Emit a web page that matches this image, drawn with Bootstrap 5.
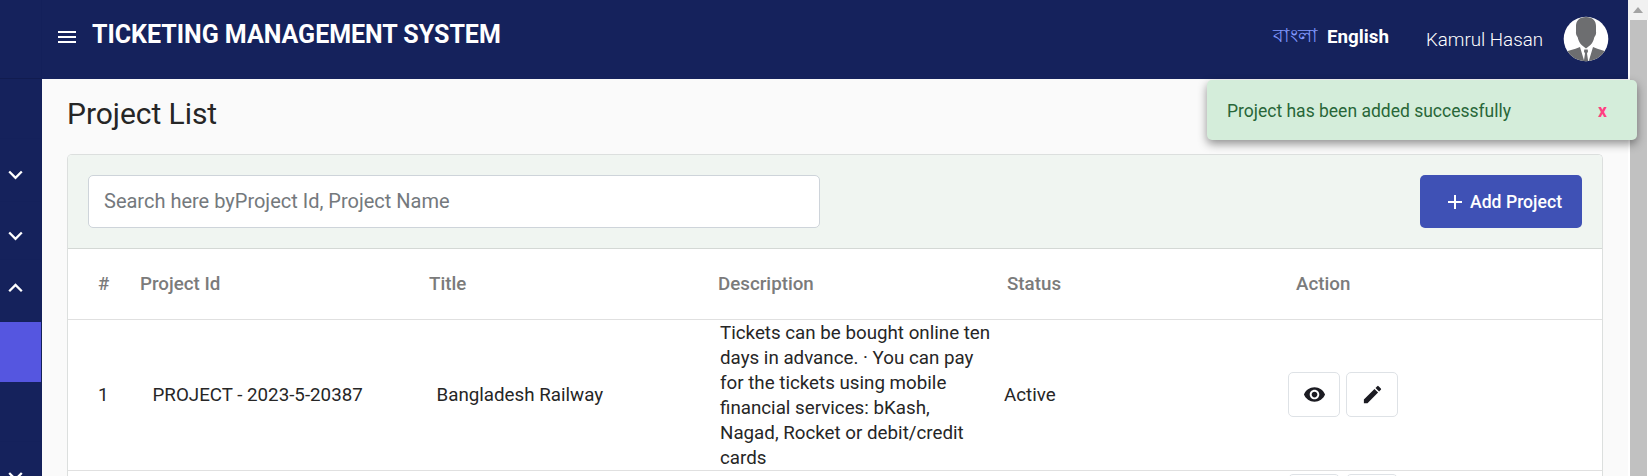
<!DOCTYPE html>
<html lang="en">
<head>
<meta charset="utf-8">
<title>Ticketing Management System</title>
<link href="https://cdn.jsdelivr.net/npm/bootstrap@5.3.0/dist/css/bootstrap.min.css" rel="stylesheet">
<style>
body{font-family:Roboto,"Noto Sans",sans-serif;font-size:18.75px;line-height:25px;color:#262626;background:#fafafa;height:476px}
.side-rail{width:42px;background:#15225c;border-right:1px solid #13205a}
.rail-brand{height:79px;border-bottom:1px solid #111c50}
.rail-item{height:60px;padding-left:7px;border-bottom:1px solid #14215b}
.rail-item.is-active{background:#5556e0;border:0}
.topbar{height:79px;background:#15225c;color:#fff;padding:0 19px 0 16px}
.brand-name{font-size:25px;font-weight:700;line-height:30px;margin:-9px 0 0 16px;letter-spacing:-.02px}
.lang-link{color:#8198ff;font-size:18.9px;line-height:24px;margin:-7px 9px 0 0}
.lang-current{margin:-5px 37px 0 0}
.user-name{margin:1px 20px 0 0}
.page-title{font-size:30px;font-weight:400;line-height:36px;padding:17px 0 22px;letter-spacing:-.05px}
.page-area{padding:0 25px}
.list-card{border:1px solid #dcdfde;border-bottom:0;border-radius:5px 5px 0 0;background:#fff;height:322px}
.list-tools{height:94px;background:#f0f5f1;border-bottom:1px solid #d4d8d5;padding:0 20px}
.search-box{width:732px;height:53px;border:1px solid #ced4da;border-radius:5px;font-size:20px;padding:0 15px 2px}
.search-box::placeholder{color:#74797d}
.add-btn{width:162px;height:53px;background:#3f51b5;color:#fff;border-radius:5px;font-size:17.6px;font-weight:500;padding:2px 19px 0 0}
.grid-row{display:grid;grid-template-columns:72px 289px 289px 289px 289px 1fr;border-bottom:1px solid #e0e0e0}
.grid-head{height:71px;color:#7b7b7b;font-weight:500}
.grid-head>:first-child,.grid-body>:first-child{padding-left:30px}
.grid-body{height:151px;grid-template-rows:150px}
.cell-id{padding-left:12.5px}
.cell-title{padding-left:7.5px}
.cell-desc{padding-left:2px;margin-top:2px}
.cell-status{margin-left:-3px}
.cell-actions{gap:6px;margin:-2px 0 0 -8px}
.next-row{padding-top:5px}
.icon-btn{width:52px;height:45px;border:1px solid #dee2e6;border-radius:5px;background:#fff}
.scroll-bar{width:20px;background:linear-gradient(90deg,#fff 2px,#c1c1c1 2px,#c1c1c1 19px,#fff 19px)}
.scroll-up{height:20px;background:#f1f1f1}
.toast-msg{top:80px;left:1207px;width:430px;height:60px;background:#d4edda;color:#286638;border-radius:5px;font-size:17.5px;padding:2px 30px 0 20px;box-shadow:0 4px 10px rgba(0,0,0,.42)}
.toast-x{color:#ff4081;font-weight:700}
</style>
</head>
<body class="d-flex overflow-hidden position-relative">
<aside class="side-rail flex-shrink-0 overflow-hidden">
  <div class="rail-brand"></div>
  <div class="rail-item"></div>
  <div class="rail-item d-flex align-items-center" style="height:63px;padding-top:10px"><svg width="17" height="12" viewBox="0 0 17 12"><path d="M2.200 2.500l6.300 6.300 6.300-6.300" fill="none" stroke="#fff" stroke-width="2.300"/></svg></div>
  <div class="rail-item d-flex align-items-center" style="height:58px;padding-top:11px"><svg width="17" height="12" viewBox="0 0 17 12"><path d="M2.200 2.500l6.300 6.300 6.300-6.300" fill="none" stroke="#fff" stroke-width="2.300"/></svg></div>
  <div class="rail-item d-flex align-items-center" style="height:62px;padding-bottom:6px"><svg width="17" height="12" viewBox="0 0 17 12"><path d="M2.200 9.200l6.300-6.300 6.300 6.300" fill="none" stroke="#fff" stroke-width="2.300"/></svg></div>
  <div class="rail-item is-active"></div>
  <div class="rail-item"></div>
  <div class="rail-item border-0" style="height:34px;padding-top:26px;line-height:0"><svg width="17" height="8" viewBox="0 0 17 8"><path d="M2.200 5l6.300 6.300 6.300-6.300" fill="none" stroke="#fff" stroke-width="2.300"/></svg></div>
</aside>
<main class="flex-grow-1">
  <header class="topbar d-flex align-items-center">
    <svg width="18" height="14" viewBox="0 0 18 14" style="margin-top:-6px"><path d="M0 2h18M0 7h18M0 12h18" stroke="#fff" stroke-width="2"/></svg>
    <div class="brand-name me-auto">TICKETING MANAGEMENT SYSTEM</div>
    <span class="lang-link">বাংলা</span>
    <span class="lang-current fw-bold">English</span>
    <span class="user-name fw-light">Kamrul Hasan</span>
    <svg width="46" height="46" viewBox="0 0 46 46" style="margin-top:-1px">
      <defs><clipPath id="round"><circle cx="23" cy="23" r="22.3"/></clipPath></defs>
      <g clip-path="url(#round)"><path fill="#fff" d="M0 0h46v46H0z"/>
      <path fill="#6d6e70" d="M23 1c7 0 10 4 10 9v5c.5 3-.6 5-1.600 6-1 4-2 6-4 8l-4.400 3.500-4.400-3.500c-2-2-3-4-4-8-1-1-2-3-1.600-6v-5c0-5 3-9 10-9z"/>
      <path fill="#6d6e70" d="M0 46V37c5-3 11-3 17-6l4.500 15zM46 46V37c-5-3-10-3-16-6l-4.500 15z"/>
      <path fill="#6d6e70" d="M21.300 33.500h3.400l.3 2-1 2 1.300 8.500h-4.600l1.300-8.500-1-2z"/></g>
    </svg>
  </header>
  <div class="page-area">
    <h1 class="page-title m-0">Project List</h1>
    <section class="list-card overflow-hidden">
      <div class="list-tools d-flex align-items-center justify-content-between">
        <input class="form-control search-box" placeholder="Search here byProject Id, Project Name">
        <button class="btn add-btn d-flex align-items-center justify-content-end"><svg width="14" height="14" viewBox="0 0 14 14" style="margin:-2px 8px 0 0"><path d="M7 0v14M0 7h14" stroke="#fff" stroke-width="2"/></svg>Add Project</button>
      </div>
      <div class="grid-row grid-head align-items-center"><span>#</span><span>Project Id</span><span>Title</span><span>Description</span><span>Status</span><span>Action</span></div>
      <div class="grid-row grid-body align-items-center">
        <span>1</span><span class="cell-id">PROJECT - 2023-5-20387</span><span class="cell-title">Bangladesh Railway</span>
        <span class="cell-desc">Tickets can be bought online ten<br>days in advance. · You can pay<br>for the tickets using mobile<br>financial services: bKash,<br>Nagad, Rocket or debit/credit<br>cards</span>
        <span class="cell-status">Active</span>
        <span class="cell-actions d-flex">
          <button class="icon-btn p-0 d-flex align-items-center justify-content-center"><svg width="23" height="23" viewBox="0 0 24 24" fill="#1b1b22"><path d="M12 4.500C7 4.500 2.730 7.610 1 12c1.730 4.390 6 7.500 11 7.500s9.270-3.110 11-7.500c-1.730-4.390-6-7.500-11-7.500zM12 17c-2.760 0-5-2.240-5-5s2.240-5 5-5 5 2.240 5 5-2.240 5-5 5zm0-8c-1.660 0-3 1.340-3 3s1.340 3 3 3 3-1.340 3-3-1.340-3-3-3z"/></svg></button>
          <button class="icon-btn p-0 d-flex align-items-center justify-content-center"><svg width="23" height="23" viewBox="0 0 24 24" fill="#1b1b22"><path d="M3 17.250V21h3.750L17.810 9.940l-3.750-3.750L3 17.250zM20.710 7.040a1 1 0 0 0 0-1.410l-2.340-2.340a1 1 0 0 0-1.410 0l-1.830 1.830 3.750 3.750 1.830-1.830z"/></svg></button>
        </span>
      </div>
      <div class="grid-row next-row"><span></span><span></span><span></span><span></span><span></span><span class="cell-actions d-flex"><button class="icon-btn"></button><button class="icon-btn"></button></span></div>
    </section>
  </div>
</main>
<div class="scroll-bar flex-shrink-0"><div class="scroll-up d-flex justify-content-center align-items-center"><svg width="10" height="6" viewBox="0 0 10 6"><path d="M5 0l5 6H0z" fill="#a3a3a3"/></svg></div></div>
<div class="toast-msg position-absolute d-flex align-items-center justify-content-between"><span>Project has been added successfully</span><span class="toast-x">x</span></div>
<script src="https://cdn.jsdelivr.net/npm/bootstrap@5.3.0/dist/js/bootstrap.bundle.min.js"></script>
</body>
</html>
